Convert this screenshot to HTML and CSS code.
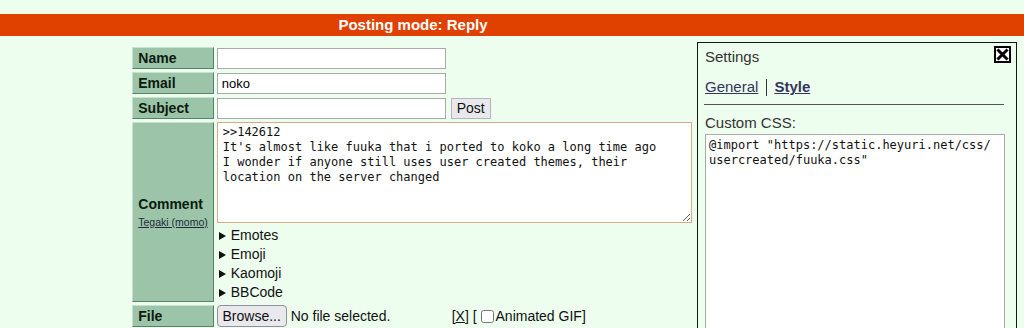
FILE: index.html
```html
<!DOCTYPE html>
<html lang="en">
<head>
  <meta charset="utf-8" />
  <title>Reply — Heyuri</title>
  <meta name="viewport" content="width=device-width,initial-scale=1" />
  <link rel="stylesheet" href="styles.css">
</head>
<body>
  <div class="postmode">Posting mode: Reply</div>

  <div class="main">
    <form id="postform" class="postform" method="post" action="#" autocomplete="off">
      <table class="formtable">
        <tr>
          <td class="lbl">Name</td>
          <td><div class="cell-in"><input type="text" class="field" name="name"></div></td>
        </tr>
        <tr>
          <td class="lbl">Email</td>
          <td><div class="cell-in"><input type="text" class="field" name="email" value="noko"></div></td>
        </tr>
        <tr>
          <td class="lbl">Subject</td>
          <td><div class="cell-in"><input type="text" class="field" name="sub"><button type="button" class="btn post-btn">Post</button></div></td>
        </tr>
        <tr>
          <td class="lbl lbl-comment">
            <div>Comment</div>
            <a href="#" class="tegaki">Tegaki (momo)</a>
          </td>
          <td>
            <textarea class="com" name="com" spellcheck="false">&gt;&gt;142612
It's almost like fuuka that i ported to koko a long time ago
I wonder if anyone still uses user created themes, their location on the server changed</textarea>
            <details class="fold"><summary>Emotes</summary></details>
            <details class="fold"><summary>Emoji</summary></details>
            <details class="fold"><summary>Kaomoji</summary></details>
            <details class="fold"><summary>BBCode</summary></details>
          </td>
        </tr>
        <tr>
          <td class="lbl">File</td>
          <td>
            <div class="cell-in filecell">
              <span class="filebox"><button type="button" class="btn browse-btn">Browse...</button> No file selected.</span>
              [<a href="#" class="clear">X</a>]&nbsp;[&nbsp;<label class="gif"><input type="checkbox" class="chk">Animated GIF</label>]
            </div>
          </td>
        </tr>
      </table>
    </form>
  </div>

  <div class="settings">
    <div class="settings-title">Settings</div>
    <a href="#" class="close" title="Close">
      <svg width="17" height="17" viewBox="0 0 17 17">
        <rect x="1" y="1" width="15" height="15" fill="#fff" stroke="#000" stroke-width="2"/>
        <path d="M4.5 4.5 L12.5 12.5 M12.5 4.5 L4.5 12.5" stroke="#000" stroke-width="3" stroke-linecap="square"/>
      </svg>
    </a>
    <div class="tabs">
      <a href="#" class="tab">General</a><span class="sep"></span><a href="#" class="tab active">Style</a>
    </div>
    <div class="rule"></div>
    <div class="css-label">Custom CSS:</div>
    <textarea class="css-box" spellcheck="false">@import "https://static.heyuri.net/css/usercreated/fuuka.css"</textarea>
  </div>
</body>
</html>
```

FILE: styles.css
```css
body {
  background: #edfeee;
  font-family: "Liberation Sans", Arial, sans-serif;
  color: #111;
  margin: 0;
  padding: 14px 0 0;
  overflow: hidden;
}
.postmode {
  background: #e04000;
  color: #fff;
  font-weight: 700;
  font-size: 15px;
  line-height: 22px;
  text-align: center;
  padding-right: 198px;
}
.main {
  width: 824px;
  padding-top: 8px;
}
.formtable {
  margin: 0 auto;
  border-collapse: separate;
  border-spacing: 3px;
}
.formtable td {
  padding: 0;
  vertical-align: middle;
}
.formtable td.lbl {
  width: 68px;
  padding: 0 5px;
  background: #9bc4a8;
  border: 1px solid;
  border-color: #c6e3cf #55806a #55806a #c6e3cf;
  font-weight: 700;
  font-size: 14px;
  color: #0c1a10;
  white-space: nowrap;
}
.cell-in {
  display: flex;
  align-items: center;
  height: 22px;
}
.lbl-comment div {
  line-height: 18px;
}
.tegaki {
  font-size: 10.5px;
  font-weight: 400;
  color: #1f2a3a;
}
.field {
  box-sizing: border-box;
  width: 229px;
  height: 21px;
  margin: 0;
  padding: 1px 4px;
  border: 1px solid #a9a9a9;
  background: #fff;
  font-family: "Liberation Sans", Arial, sans-serif;
  font-size: 13px;
}
.btn {
  background: #e9e9ed;
  border: 1px solid #b5b5bd;
  color: #111;
  font-family: "Liberation Sans", Arial, sans-serif;
  font-size: 14px;
  padding: 0;
}
.post-btn {
  width: 40px;
  height: 21px;
  margin-left: 5px;
}
.com {
  display: block;
  box-sizing: border-box;
  width: 475px;
  height: 101px;
  margin: 0 0 3px;
  padding: 2px 5px;
  border: 1px solid #d9a98c;
  background: #fff;
  font-family: "DejaVu Sans Mono", monospace;
  font-size: 12px;
  line-height: 15px;
  color: #111;
}
.fold summary {
  list-style: none;
  display: flex;
  align-items: center;
  font-size: 14px;
  line-height: 19px;
  cursor: pointer;
}
.fold summary::-webkit-details-marker {
  display: none;
}
.fold summary::before {
  content: "";
  width: 0;
  height: 0;
  margin: 0 5px 0 2px;
  border-left: 7px solid #111;
  border-top: 4px solid transparent;
  border-bottom: 4px solid transparent;
}
.filecell {
  font-size: 14px;
  white-space: nowrap;
}
.filebox {
  display: inline-flex;
  align-items: center;
  width: 235px;
}
.browse-btn {
  width: 70px;
  height: 22px;
  border-color: #8f8f9d;
  border-radius: 4px;
  margin-right: 4px;
}
.clear {
  color: #111;
}
.gif {
  display: inline-flex;
  align-items: center;
}
.chk {
  width: 13px;
  height: 13px;
  margin: 0 2px 0 0;
}
.settings {
  position: absolute;
  left: 697px;
  top: 42px;
  box-sizing: border-box;
  width: 320px;
  height: 300px;
  padding: 4px 10px 0 7px;
  border: 1px solid #0d1a0d;
  background: #edfeee;
  color: #333;
  font-size: 15px;
}
.settings-title {
  line-height: 20px;
}
.close {
  position: absolute;
  top: 3px;
  right: 5px;
  display: block;
  width: 17px;
  height: 17px;
}
.tabs {
  margin-top: 10px;
  line-height: 20px;
  display: flex;
  align-items: center;
}
.tab {
  color: #34345c;
}
.tab.active {
  font-weight: 700;
}
.sep {
  width: 1px;
  height: 17px;
  background: #333;
  margin: 0 7px 0 8px;
}
.rule {
  margin: 7px 0 0 -1px;
  border-top: 1px solid #555;
  width: 300px;
}
.css-label {
  margin-top: 8px;
  line-height: 20px;
}
.css-box {
  display: block;
  box-sizing: border-box;
  width: 300px;
  height: 220px;
  margin: 1px 0 0;
  padding: 3px 10px 3px 3px;
  border: 1px solid #aaa;
  background: #fff;
  font-family: "DejaVu Sans Mono", monospace;
  font-size: 12px;
  line-height: 15px;
  color: #111;
  word-break: break-all;
  resize: none;
}
```
